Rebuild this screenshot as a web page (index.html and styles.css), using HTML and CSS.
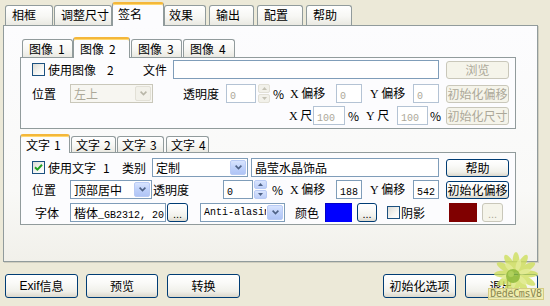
FILE: index.html
```html
<!DOCTYPE html>
<html><head><meta charset="utf-8"><link rel="stylesheet" href="styles.css"></head>
<body>
<div class="window">
  <div class="tabs main-tabs">
    <div class="tab mt1">相框</div>
    <div class="tab mt2">调整尺寸</div>
    <div class="tab sel mt3">签名</div>
    <div class="tab mt4">效果</div>
    <div class="tab mt5">输出</div>
    <div class="tab mt6">配置</div>
    <div class="tab mt7">帮助</div>
  </div>
  <div class="main-panel">
    <div class="tabs sub-tabs img-tabs">
      <div class="tab st it1">图像<span class="tn">1</span></div>
      <div class="tab st sel it2">图像<span class="tn">2</span></div>
      <div class="tab st it3">图像<span class="tn">3</span></div>
      <div class="tab st it4">图像<span class="tn">4</span></div>
    </div>
    <div class="sub-panel p1">
      <div class="row p1r1">
        <span class="cb"></span>
        <span class="lbl w95">使用图像<span class="gap11">2</span></span>
        <span class="lbl w30">文件</span>
        <span class="input w266"></span>
        <span class="btn dis side ml7">浏览</span>
      </div>
      <div class="row p1r2">
        <span class="lbl w38">位置</span>
        <span class="select dis w83"><span class="sv">左上</span><span class="arr"><svg width="7" height="5" viewBox="0 0 7 5"><path d="M0.6 0.6 L3.5 3.5 L6.4 0.6" stroke="#B8B6A8" stroke-width="1.6" fill="none"/></svg></span></span>
        <span class="lbl w43 ml30">透明度</span>
        <span class="input dis w30"><span class="num">0</span></span>
        <span class="spin dis ml2 w12"><span class="sb"><svg width="5" height="3" viewBox="0 0 5 3"><path d="M0 3 L2.5 0 L5 3Z" fill="#C4C2B4"/></svg></span><span class="sb"><svg width="5" height="3" viewBox="0 0 5 3"><path d="M0 0 L2.5 3 L5 0Z" fill="#C4C2B4"/></svg></span></span>
        <span class="lbl w19 pl3">%</span>
        <span class="lbl w47 pl1"><span class="lat">X</span> 偏移</span>
        <span class="input dis w26"><span class="num">0</span></span>
        <span class="lbl w51 pl8"><span class="lat">Y</span> 偏移</span>
        <span class="input dis w26"><span class="num">0</span></span>
        <span class="btn dis side ml7">初始化偏移</span>
      </div>
      <div class="row p1r3">
        <span class="lbl w24 ml257"><span class="lat">X</span> 尺</span>
        <span class="input dis w32"><span class="num">100</span></span>
        <span class="lbl w21 pl3">%</span>
        <span class="lbl w31"><span class="lat">Y</span> 尺</span>
        <span class="input dis w31"><span class="num">100</span></span>
        <span class="lbl w18 pl2">%</span>
        <span class="btn dis side">初始化尺寸</span>
      </div>
    </div>

    <div class="tabs sub-tabs txt-tabs">
      <div class="tab st sel tt1">文字<span class="tn">1</span></div>
      <div class="tab st tt2">文字<span class="tn">2</span></div>
      <div class="tab st tt3">文字<span class="tn">3</span></div>
      <div class="tab st tt4">文字<span class="tn">4</span></div>
    </div>
    <div class="sub-panel p2">
      <div class="row p2r1">
        <span class="cb on"><svg width="9" height="9" viewBox="0 0 9 9"><path d="M1 4.2 L3.4 6.6 L8 1.8" stroke="#21A121" stroke-width="2" fill="none"/></svg></span>
        <span class="lbl w74">使用文字<span class="gap7">1</span></span>
        <span class="lbl w30">类别</span>
        <span class="select w96"><span class="sv">定制</span><span class="arr"><svg width="7" height="5" viewBox="0 0 7 5"><path d="M0.6 0.6 L3.5 3.5 L6.4 0.6" stroke="#4D6185" stroke-width="1.6" fill="none"/></svg></span></span>
        <span class="input w188 ml3">晶莹水晶饰品</span>
        <span class="btn side ml7">帮助</span>
      </div>
      <div class="row p2r2">
        <span class="lbl w38">位置</span>
        <span class="select w82"><span class="sv">顶部居中</span><span class="arr"><svg width="7" height="5" viewBox="0 0 7 5"><path d="M0.6 0.6 L3.5 3.5 L6.4 0.6" stroke="#4D6185" stroke-width="1.6" fill="none"/></svg></span></span>
        <span class="lbl w71 pl1">透明度</span>
        <span class="input w30"><span class="num">0</span></span>
        <span class="spin ml1 w13"><span class="sb"><svg width="5" height="3" viewBox="0 0 5 3"><path d="M0 3 L2.5 0 L5 3Z" fill="#4D6185"/></svg></span><span class="sb"><svg width="5" height="3" viewBox="0 0 5 3"><path d="M0 0 L2.5 3 L5 0Z" fill="#4D6185"/></svg></span></span>
        <span class="lbl w22 pl5">%</span>
        <span class="lbl w47 pl1"><span class="lat">X</span> 偏移</span>
        <span class="input w26"><span class="num">188</span></span>
        <span class="lbl w51 pl8"><span class="lat">Y</span> 偏移</span>
        <span class="input w26"><span class="num">542</span></span>
        <span class="btn side ml7">初始化偏移</span>
      </div>
      <div class="row p2r3">
        <span class="lbl w38 pl3">字体</span>
        <span class="input w96">楷体<span class="num">_GB2312, 20</span></span>
        <span class="btn dots ml1 w21">...</span>
        <span class="select ml12 w85"><span class="sv mono">Anti-alasing</span><span class="arr"><svg width="7" height="5" viewBox="0 0 7 5"><path d="M0.6 0.6 L3.5 3.5 L6.4 0.6" stroke="#4D6185" stroke-width="1.6" fill="none"/></svg></span></span>
        <span class="lbl w40 pl10">颜色</span>
        <span class="swatch blue w27"></span>
        <span class="btn dots ml5 w20">...</span>
        <span class="cb ml10"></span>
        <span class="lbl w49 pl1">阴影</span>
        <span class="swatch red w28"></span>
        <span class="btn dots dis ml5 w21">...</span>
      </div>
    </div>
  </div>

  <div class="bottom-bar">
    <span class="btn big w73"><span class="lt">Exif</span>信息</span>
    <span class="btn big w72 ml8">预览</span>
    <span class="btn big w73 ml9">转换</span>
    <span class="btn big w73 ml143">初始化选项</span>
    <span class="btn big w73 ml9">退出</span>
  </div>
</div>

<div class="watermark">
  <svg class="flower" width="62" height="42" viewBox="0 0 62 42">
    <g transform="translate(30 22)" fill="#CFE05E" opacity="0.8">
      <ellipse cx="0" cy="-12" rx="3.5" ry="10" transform="rotate(0)"/>
      <ellipse cx="0" cy="-12" rx="3.5" ry="10" transform="rotate(30)"/>
      <ellipse cx="0" cy="-12" rx="3.5" ry="10" transform="rotate(60)"/>
      <ellipse cx="0" cy="-12" rx="3.5" ry="10" transform="rotate(90)"/>
      <ellipse cx="0" cy="-12" rx="3.5" ry="10" transform="rotate(120)"/>
      <ellipse cx="0" cy="-12" rx="3.5" ry="10" transform="rotate(150)"/>
      <ellipse cx="0" cy="-12" rx="3.5" ry="10" transform="rotate(180)"/>
      <ellipse cx="0" cy="-12" rx="3.5" ry="10" transform="rotate(210)"/>
      <ellipse cx="0" cy="-12" rx="3.5" ry="10" transform="rotate(240)"/>
      <ellipse cx="0" cy="-12" rx="3.5" ry="10" transform="rotate(270)"/>
      <ellipse cx="0" cy="-12" rx="3.5" ry="10" transform="rotate(300)"/>
      <ellipse cx="0" cy="-12" rx="3.5" ry="10" transform="rotate(330)"/>
    </g>
    <g transform="translate(30 22)" fill="#E6EE9C" opacity="0.75">
      <ellipse cx="0" cy="-9" rx="2.5" ry="6" transform="rotate(15)"/>
      <ellipse cx="0" cy="-9" rx="2.5" ry="6" transform="rotate(75)"/>
      <ellipse cx="0" cy="-9" rx="2.5" ry="6" transform="rotate(135)"/>
      <ellipse cx="0" cy="-9" rx="2.5" ry="6" transform="rotate(195)"/>
      <ellipse cx="0" cy="-9" rx="2.5" ry="6" transform="rotate(255)"/>
      <ellipse cx="0" cy="-9" rx="2.5" ry="6" transform="rotate(315)"/>
    </g>
    <circle cx="27" cy="24" r="7" fill="#8DB83A" opacity="0.85"/>
    <circle cx="25" cy="22" r="3" fill="#B5D560" opacity="0.8"/>
  </svg>
  <span class="wm-label">DedeCmsV8</span>
</div>
</body></html>
```

FILE: styles.css
```css
* { box-sizing: border-box; }
html, body { margin: 0; padding: 0; }
body {
  width: 550px; height: 306px; overflow: hidden; position: relative;
  background: #ECE9D8;
  font-family: "Noto Sans CJK SC", "DejaVu Sans", sans-serif;
  font-size: 12px; line-height: 1; color: #000;
}
.window { padding: 2px 0 0 3px; }

/* tabs */
.tabs { display: flex; align-items: flex-end; position: relative; z-index: 1; }
.main-tabs { height: 23px; }
.tab {
  height: 20px; border: 1px solid #919B9C; border-bottom: none;
  border-radius: 3px 3px 0 0;
  background: linear-gradient(#FFFFFF, #F7F7F4 55%, #EAE9E2);
  padding-left: 6px; line-height: 18px; white-space: nowrap; flex: none;
}
.tab.sel {
  height: 24px; margin-bottom: -1px; background: #FCFCFE;
  border-top: 2px solid #F4B73A; box-shadow: inset 0 1px 0 #FFD86E;
  line-height: 20px; padding-left: 5px;
}
.mt1 { margin-left: 2px; width: 48px; }
.mt2 { margin-left: 1px; width: 58px; }
.mt3 { width: 52px; }
.mt4 { width: 42px; padding-left: 4px; }
.mt5 { margin-left: 3px; width: 45px; }
.mt6 { margin-left: 3px; width: 46px; }
.mt7 { margin-left: 3px; width: 46px; }

.main-panel {
  width: 535px; height: 237px;
  border: 1px solid #919B9C;
  box-shadow: 1px 1px 0 #D0CEBF;
  background: linear-gradient(#FCFCFE, #F9F9F7 70%, #F1F0EA);
}

.sub-tabs { margin-left: 16px; }
.img-tabs { margin-top: 11px; height: 20px; }
.txt-tabs { margin-top: 5px; height: 18px; }
.tab.st { height: 18px; line-height: 17px; padding-left: 6px; }
.txt-tabs .tab.st { height: 16px; line-height: 15px; padding-left: 4px; }
.tab.st.sel { height: 21px; line-height: 19px; }
.txt-tabs .tab.st.sel { height: 19px; line-height: 17px; padding-left: 5px; }
.tn { margin-left: 5px; }
.txt-tabs .tn { margin-left: 4px; }
.it1 { margin-left: 2px; width: 51px; }
.it2 { width: 57px; }
.it3 { margin-left: 1px; width: 51px; }
.it4 { margin-left: 1px; width: 52px; }
.tt1 { width: 50px; }
.tt2 { margin-left: 1px; width: 45px; }
.tt3 { margin-left: 1px; width: 47px; }
.tt4 { margin-left: 2px; width: 43px; }

.sub-panel {
  margin-left: 16px; width: 496px;
  border: 1px solid #919B9C;
  background: #FCFCFE;
}
.p1 { height: 72px; padding-top: 2px; }
.p2 { height: 73px; padding-top: 5px; }

.row { display: flex; align-items: center; height: 19px; padding-left: 11px; }
.p1r2 { margin-top: 5px; }
.p1r3 { margin-top: 3px; }
.p2r2 { margin-top: 3px; }
.p2r3 { margin-top: 4px; }

.lbl { flex: none; white-space: nowrap; line-height: 19px; }
.lat { font-family: "Liberation Serif", serif; font-size: 12px; }
.gap11 { margin-left: 11px; }
.gap7 { margin-left: 7px; }
.mono { font-family: "Liberation Mono", monospace; font-size: 10px; }
.num { font-family: "Liberation Mono", monospace; font-size: 10px; }

/* checkbox */
.cb {
  flex: none; width: 13px; height: 13px; margin-right: 3px;
  border: 1px solid #1C5180;
  background: linear-gradient(135deg, #DCDBD5, #F6F6F3 60%, #FFFFFF);
  display: flex; align-items: center; justify-content: center;
}

/* inputs */
.input {
  flex: none; height: 19px; border: 1px solid #7F9DB9; background: #FFFFFF;
  padding-left: 3px; line-height: 17px; white-space: nowrap; overflow: hidden;
}
.input.dis { border-color: #B4C3D4; color: #ACA899; }

.select {
  flex: none; height: 19px; display: flex; border: 1px solid #7F9DB9; background: #FFFFFF;
}
.select .sv { flex: 1; padding-left: 3px; line-height: 17px; overflow: hidden; white-space: nowrap; }
.select .arr {
  flex: none; width: 16px; margin: 1px; border-radius: 2px;
  border: 1px solid #B9CBF5;
  background: linear-gradient(#D8E4FE, #BFD1FA 50%, #B0C5F6);
  display: flex; align-items: center; justify-content: center;
}
.select.dis { border-color: #C9C7BA; background: #F7F6F1; color: #ACA899; }
.select.dis .arr { border-color: #E2E0D6; background: #F2F1EA; }

.spin { flex: none; height: 19px; display: flex; flex-direction: column; gap: 1px; }
.spin .sb {
  flex: 1; border-radius: 2px; border: 1px solid #B9CBF5;
  background: linear-gradient(#DAE5FE, #BCCEF8);
  display: flex; align-items: center; justify-content: center;
}
.spin.dis .sb { border-color: #E2E0D6; background: #F2F1EA; }

.swatch { flex: none; height: 19px; }
.blue { background: #0000FF; border-top: 1px solid #0000C8; border-left: 1px solid #0000C8; }
.red { background: #800000; }

/* buttons */
.btn {
  flex: none; display: flex; align-items: center; justify-content: center;
  border: 1px solid #003C74; border-radius: 3px;
  background: linear-gradient(#FFFFFF, #FAFAF8 35%, #F0F0EA 75%, #DCD8CC);
  white-space: nowrap;
}
.btn.side { width: 63px; height: 18px; }
.btn.dis { border-color: #C9C7BA; background: #F5F4EA; color: #ACA899; }
.btn.dots { height: 19px; line-height: 1; font-family: "Liberation Sans", sans-serif; font-size: 11px; padding-top: 4px; }
.btn.big { height: 24px; }
.lt { font-family: "Liberation Sans", sans-serif; font-size: 12px; }

.bottom-bar { display: flex; margin-top: 12px; margin-left: 2px; }

/* sizes */
.w12 { width: 12px; } .w13 { width: 13px; } .w18 { width: 18px; } .w19 { width: 19px; }
.w20 { width: 20px; } .w21 { width: 21px; } .w22 { width: 22px; } .w24 { width: 24px; }
.w26 { width: 26px; } .w27 { width: 27px; } .w28 { width: 28px; } .w30 { width: 30px; }
.w31 { width: 31px; } .w32 { width: 32px; } .w38 { width: 38px; } .w40 { width: 40px; }
.w43 { width: 43px; } .w47 { width: 47px; } .w49 { width: 49px; } .w51 { width: 51px; }
.w71 { width: 71px; } .w72 { width: 72px; } .w73 { width: 73px; } .w74 { width: 74px; }
.w82 { width: 82px; } .w83 { width: 83px; } .w85 { width: 85px; } .w95 { width: 95px; }
.w96 { width: 96px; } .w188 { width: 188px; } .w266 { width: 266px; }
.ml1 { margin-left: 1px; } .ml2 { margin-left: 2px; } .ml3 { margin-left: 3px; }
.ml5 { margin-left: 5px; } .ml7 { margin-left: 7px; } .ml8 { margin-left: 8px; }
.ml9 { margin-left: 9px; } .ml10 { margin-left: 10px; } .ml12 { margin-left: 12px; }
.ml30 { margin-left: 30px; } .ml143 { margin-left: 143px; } .ml257 { margin-left: 257px; }
.pl1 { padding-left: 1px; } .pl2 { padding-left: 2px; } .pl3 { padding-left: 3px; }
.pl5 { padding-left: 5px; } .pl8 { padding-left: 8px; } .pl10 { padding-left: 10px; }
.cb.ml10 { margin-left: 10px; margin-right: 0; }

/* watermark overlay */
.watermark { position: absolute; left: 486px; top: 252px; width: 62px; height: 50px; pointer-events: none; }
.flower { display: block; }
.wm-label {
  position: absolute; left: 2px; top: 36px; width: 56px; height: 12px;
  background: rgba(243, 239, 170, 0.85); border: 1px solid #D3CC84;
  color: #8A8850; font-family: "DejaVu Sans Mono", monospace; font-size: 10px; line-height: 10px;
  text-align: center; letter-spacing: -0.3px;
}
```
